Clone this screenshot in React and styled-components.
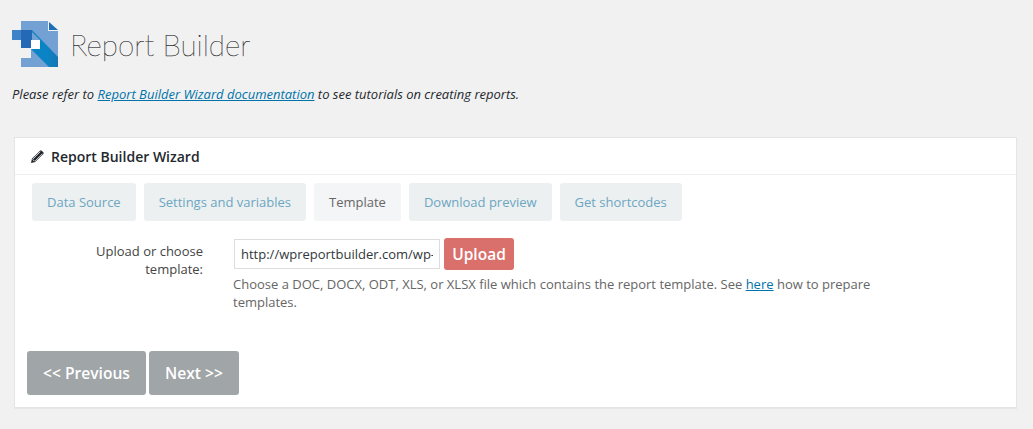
import React from "react";
import styled, { createGlobalStyle } from "styled-components";

const Global = createGlobalStyle`
  html, body { margin: 0; padding: 0; background: #f1f1f1; }
  body { font-family: "Open Sans", sans-serif; color: #444; font-size: 13px; }
`;

const Page = styled.div`
  width: 1033px;
  height: 429px;
  overflow: hidden;
  box-sizing: border-box;
  padding: 21px 16px 0 14px;
`;

const Brand = styled.div`
  display: flex;
  align-items: flex-start;
  gap: 13px;
  margin-left: -2px;
`;

const Title = styled.h1`
  margin: 5px 0 0 -1px;
  font-family: "Lato", sans-serif;
  font-weight: 100;
  font-size: 29.6px;
  line-height: 38px;
  color: #111;
  -webkit-text-stroke: 0.25px #333;
`;

const Intro = styled.p`
  margin: 18px 0 0 -2px;
  font-size: 13px;
  line-height: 18px;
  font-style: italic;
  color: #23282d;
`;

const Link = styled.a`
  color: #0073aa;
  text-decoration: underline;
`;

const Card = styled.section`
  margin-top: 34px;
  height: 271px;
  box-sizing: border-box;
  background: #fff;
  border: 1px solid #e5e5e5;
  box-shadow: 0 1px 1px rgba(0, 0, 0, 0.04);
`;

const CardHeader = styled.div`
  display: flex;
  align-items: center;
  gap: 6px;
  height: 37px;
  box-sizing: border-box;
  padding-left: 15px;
  border-bottom: 1px solid #eee;
  font-size: 14px;
  font-weight: 600;
  color: #23282d;
`;

const Tabs = styled.div`
  display: flex;
  gap: 8px;
  margin: 8px 0 0 17px;
`;

const Tab = styled.div`
  height: 38px;
  box-sizing: border-box;
  padding: 0 15px;
  display: flex;
  align-items: center;
  border-radius: 3px;
  font-size: 13px;
  background: ${(p) => (p.$active ? "#f4f5f6" : "#ecf0f1")};
  color: ${(p) => (p.$active ? "#666" : "#6ca6c1")};
`;

const FormRow = styled.div`
  display: flex;
  margin-top: 17px;
`;

const Label = styled.label`
  width: 188px;
  flex: none;
  box-sizing: border-box;
  padding: 4px 0 0 70px;
  text-align: right;
  font-size: 13px;
  line-height: 18px;
  color: #444;
`;

const Field = styled.div`
  width: 640px;
  margin-left: 30px;
`;

const UploadLine = styled.div`
  display: flex;
  align-items: center;
  gap: 4px;
  margin-left: 1px;
`;

const UrlInput = styled.input`
  width: 206px;
  height: 30px;
  box-sizing: border-box;
  padding: 0 6px;
  border: 1px solid #ddd;
  background: #fff;
  font-family: "Open Sans", sans-serif;
  font-size: 13px;
  color: #32373c;
  outline: none;
`;

const Button = styled.button`
  border: 0;
  border-radius: 3px;
  font-family: "Open Sans", sans-serif;
  font-weight: 600;
  color: #fff;
  padding: 0;
`;

const UploadButton = styled(Button)`
  width: 70px;
  height: 32px;
  font-size: 15.5px;
  background: #d9706c;
`;

const Help = styled.p`
  margin: 5px 0 0;
  font-size: 13px;
  line-height: 18px;
  color: #666;
`;

const Actions = styled.div`
  display: flex;
  gap: 3px;
  margin: 40px 0 0 12px;
`;

const NavButton = styled(Button)`
  height: 44px;
  width: ${(p) => p.$w}px;
  font-size: 15.6px;
  background: #a0a5a7;
`;

const Logo = () => (
  <svg width="46" height="46" viewBox="0 0 46 46" aria-hidden="true">
    <defs>
      <linearGradient id="band" x1="0.6" y1="0" x2="1" y2="0">
        <stop offset="0" stopColor="#0a84c4" />
        <stop offset="1" stopColor="#1a74b4" />
      </linearGradient>
    </defs>
    <path d="M9 0H36V10H46V46H9V37H19V27H9Z" fill="#74a1d3" />
    <path d="M37 1L46 9H37Z" fill="#1e6db5" />
    <path d="M0 9H9V19H0Z" fill="#3f82c8" />
    <path d="M9 9H20V27H9Z" fill="#2369b6" />
    <path d="M20 9L46 36V46H37L19 28H28V19L20 11Z" fill="url(#band)" />
    <path d="M19 19H28V28H19Z" fill="#fff" />
  </svg>
);

const Pencil = () => (
  <svg width="15" height="15" viewBox="0 0 15 15" aria-hidden="true">
    <path d="M1 14l.9-4.2L10 1.7a1.2 1.2 0 0 1 1.7 0l1.6 1.6a1.2 1.2 0 0 1 0 1.7L5.2 13.1z" fill="#23282d" />
    <path d="M3 9.9l7.3-7.2M5.1 12l7.3-7.2M2.6 10.3l2.1 2.1" stroke="#fff" strokeWidth="0.8" fill="none" />
  </svg>
);

const tabs = ["Data Source", "Settings and variables", "Template", "Download preview", "Get shortcodes"];

export default function App() {
  return (
    <Page>
      <Global />
      <Brand>
        <Logo />
        <Title>Report Builder</Title>
      </Brand>
      <Intro>
        Please refer to <Link href="#">Report Builder Wizard documentation</Link> to see tutorials on creating reports.
      </Intro>
      <Card>
        <CardHeader>
          <Pencil />
          Report Builder Wizard
        </CardHeader>
        <Tabs>
          {tabs.map((t) => (
            <Tab key={t} $active={t === "Template"}>{t}</Tab>
          ))}
        </Tabs>
        <FormRow>
          <Label>Upload or choose template:</Label>
          <Field>
            <UploadLine>
              <UrlInput readOnly value="http://wpreportbuilder.com/wp-content/uploads/template.docx" />
              <UploadButton>Upload</UploadButton>
            </UploadLine>
            <Help>
              Choose a DOC, DOCX, ODT, XLS, or XLSX file which contains the report template. See <Link href="#">here</Link> how to prepare templates.
            </Help>
          </Field>
        </FormRow>
        <Actions>
          <NavButton $w={119}>&lt;&lt; Previous</NavButton>
          <NavButton $w={90}>Next &gt;&gt;</NavButton>
        </Actions>
      </Card>
    </Page>
  );
}
